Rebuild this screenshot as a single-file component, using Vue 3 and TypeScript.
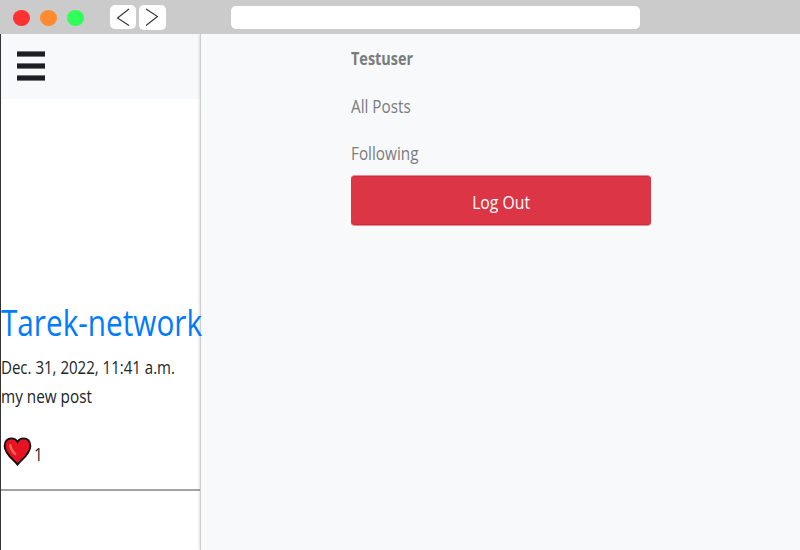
<script setup lang="ts">
import { ref } from 'vue'

interface Post {
  author: string
  date: string
  body: string
  likes: number
}

const lights = ['red', 'orange', 'green']
const links = ['All Posts', 'Following']
const username = ref('Testuser')
const post = ref<Post>({
  author: 'Tarek-network',
  date: 'Dec. 31, 2022, 11:41 a.m.',
  body: 'my new post',
  likes: 1,
})
</script>

<template>
  <div class="window">
    <header class="chrome">
      <div class="lights">
        <span v-for="c in lights" :key="c" class="light" :class="c"></span>
      </div>
      <div class="arrows">
        <button class="arrow back" aria-label="Back">
          <svg width="26" height="24" viewBox="0 0 26 24"><path d="M19 4 7.500 13 19 20.500" /></svg>
        </button>
        <button class="arrow forward" aria-label="Forward">
          <svg width="27" height="25" viewBox="0 0 27 25"><path d="M7 4 18.500 11.500 7 20.500" /></svg>
        </button>
      </div>
      <div class="address"></div>
    </header>

    <div class="page">
      <main class="feed">
        <div class="topbar">
          <div class="burger"><i></i><i></i><i></i></div>
        </div>
        <article class="post">
          <h1 class="author"><span class="fit">{{ post.author }}</span></h1>
          <p class="date"><span class="fit">{{ post.date }}</span></p>
          <p class="body"><span class="fit">{{ post.body }}</span></p>
          <div class="likes">
            <svg class="heart" width="29" height="31" viewBox="-0.500 -0.500 30 31">
              <path class="shape" d="M14.500 28.500 C10.500 23.500 1.200 17.500 1.200 9.200 C1.200 4.500 4.200 1.400 8 1.400 C11 1.400 13.400 3 14.500 5.200 C15.600 3 18 1.400 21 1.400 C24.800 1.400 27.800 4.500 27.800 9.200 C27.800 17.500 18.500 23.500 14.500 28.500 Z" />
              <path class="shine" d="M7 8.500 Q7.500 13.500 12 17.500" />
            </svg>
            <span class="fit">{{ post.likes }}</span>
          </div>
        </article>
      </main>

      <aside class="drawer">
        <nav class="menu">
          <a class="link user"><span class="fit">{{ username }}</span></a>
          <a v-for="l in links" :key="l" class="link"><span class="fit">{{ l }}</span></a>
          <button class="logout"><span class="fit">Log Out</span></button>
        </nav>
      </aside>
    </div>
  </div>
</template>

<style>
body {
  margin: 0;
  overflow: hidden;
}
</style>

<style scoped>
.window {
  width: 800px;
  height: 550px;
  display: flex;
  flex-direction: column;
  overflow: hidden;
  background: #fff;
  color: #212529;
  font-family: "Open Sans", "Noto Sans", sans-serif;
  font-size: 18px;
}
.chrome {
  height: 34px;
  flex: none;
  display: flex;
  align-items: flex-start;
  background: #cbcbcb;
}
.lights {
  display: flex;
  gap: 10px;
  padding: 10px 0 0 13px;
}
.light {
  width: 17px;
  height: 16px;
  border-radius: 50%;
}
.red { background: #ff3131; }
.orange { background: #ff8b2e; }
.green { background: #2fff58; }
.arrows {
  display: flex;
  gap: 3px;
  padding: 5px 0 0 26px;
}
.arrow {
  padding: 0;
  border: 0;
  border-radius: 5px;
  background: #fff;
}
.arrow svg {
  display: block;
  fill: none;
  stroke: #333;
  stroke-width: 1.1;
}
.back { width: 26px; height: 24px; }
.forward { width: 27px; height: 25px; }
.address {
  width: 409px;
  height: 23px;
  margin: 6px 0 0 65px;
  border-radius: 5px;
  background: #fff;
}
.page {
  flex: 1;
  display: flex;
  min-height: 0;
  overflow: hidden;
}
.feed {
  width: 200px;
  flex: none;
  box-sizing: border-box;
  border-left: 1px solid #333338;
}
.topbar {
  height: 65px;
  box-sizing: border-box;
  padding: 18px 0 0 16px;
  background: #f7f9fb;
}
.burger {
  width: 28px;
  display: flex;
  flex-direction: column;
  gap: 8px;
}
.burger i {
  height: 4px;
  background: #1c2025;
  box-shadow: 0 1px 0 rgba(28, 32, 37, 0.6), 0 -1px 0 rgba(28, 32, 37, 0.6);
}
.fit {
  display: inline-block;
  white-space: nowrap;
  transform: scaleX(0.85);
  transform-origin: 0 50%;
}
.post {
  height: 392px;
  padding-top: 198px;
  box-sizing: border-box;
  border-bottom: 2px solid #a3a3a3;
  width: 200px;
}
.author {
  margin: 0;
  font-size: 37px;
  line-height: 50px;
  font-weight: 400;
  color: #007bff;
}
.author .fit { transform: scaleX(0.803); }
.date, .body {
  margin: 0;
  line-height: 29px;
}
.date { padding-top: 6px; }
.date .fit { transform: scaleX(0.835); }
.likes {
  display: flex;
  padding: 25px 0 0 2px;
}
.heart { flex: none; }
.heart + .fit {
  margin-left: 2px;
  line-height: 36px;
}
.shape {
  fill: #e81224;
  stroke: #111;
  stroke-width: 2;
}
.shine {
  fill: none;
  stroke: #f3684f;
  stroke-width: 2.6;
  stroke-linecap: round;
}
.drawer {
  flex: 1;
  background: #f7f9fb;
  border-left: 1px solid #cdced0;
  box-shadow: -1px 0 2px rgba(0, 0, 0, 0.12);
}
.menu {
  width: 300px;
  margin-left: 150px;
  display: flex;
  flex-direction: column;
}
.link {
  height: 47.5px;
  line-height: 49px;
  color: #7b7c7d;
}
.user { font-weight: 700; }
.user .fit { transform: scaleX(0.803); }
.link:last-of-type { height: 46px; }
.logout {
  height: 51px;
  padding: 3px 0 0;
  border: solid #e78a94;
  border-width: 1px 0;
  border-radius: 4px;
  background: #dc3545;
  box-shadow: inset 0 1px 0 #d02c3c, inset 0 -1px 0 #d02c3c;
  color: #fff;
  font: inherit;
}
.logout .fit {
  transform: scaleX(0.875);
  transform-origin: 50% 50%;
}
</style>
